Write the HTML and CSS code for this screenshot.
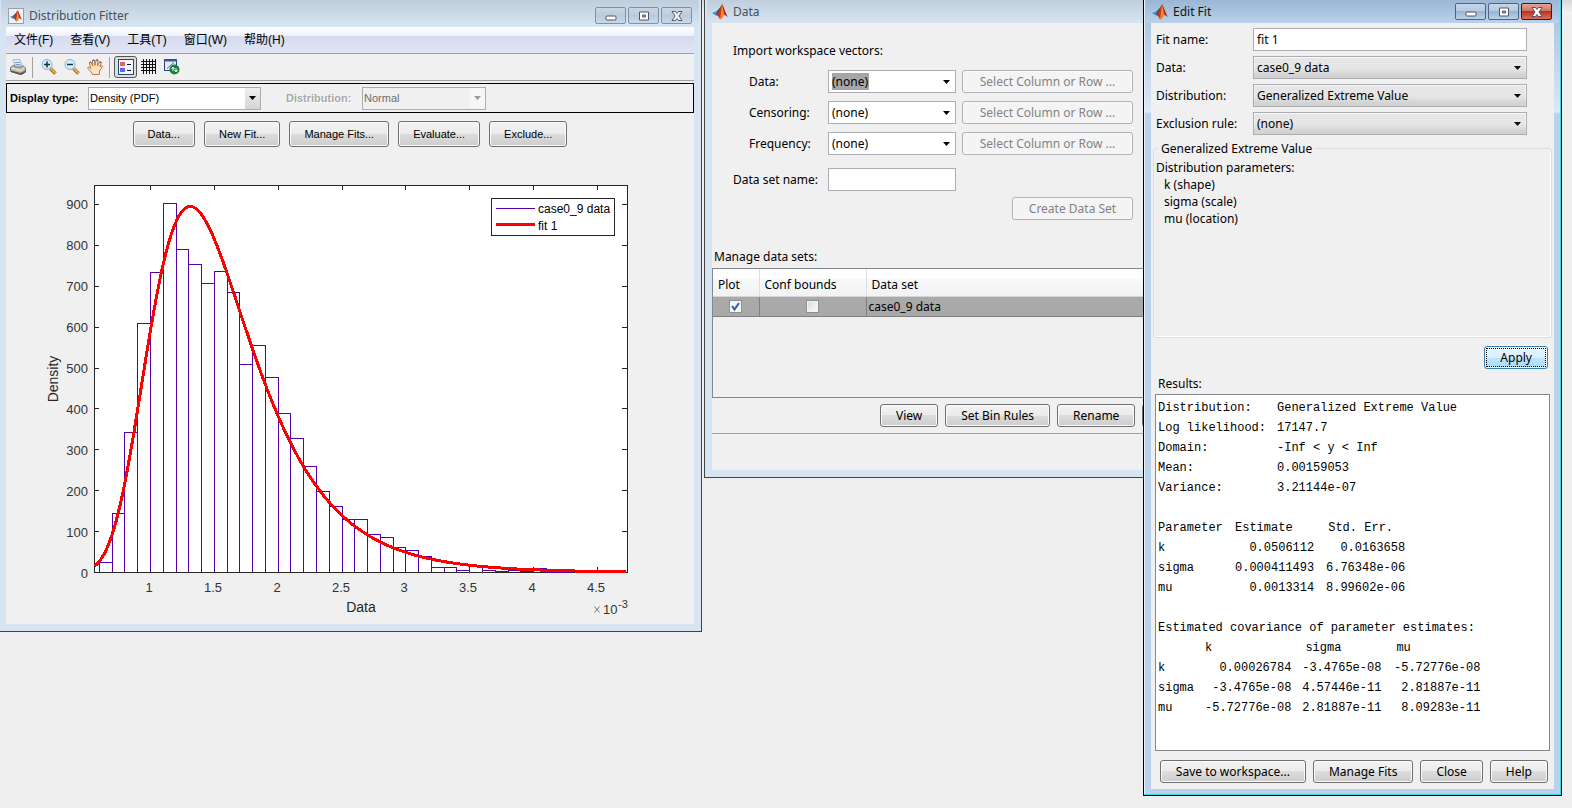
FILE: index.html
```html
<!DOCTYPE html>
<html lang="zh-CN">
<head>
    <meta charset="utf-8">
    <meta name="viewport" content="width=device-width, initial-scale=1.0">
    <title>Distribution Fitter</title>
    <link rel="stylesheet" href="styles.css">
</head>
<body>
<svg class="defs" width="0" height="0" aria-hidden="true">
    <symbol id="logo" viewBox="0 0 16 16">
        <path d="M0 9 L5 7 L7 8.500 L4 11.500 Z" fill="#3b8fd0"/>
        <path d="M5 7 L8 3.500 L10 1 L8.500 6 L6.500 9.500 L4 11.500 Z" fill="#27557f"/>
        <path d="M10 0 C8.500 3 8 7 4 11.500 C6 11 7 13 8 15.500 L11 13 L11.500 5 Z" fill="#c8371c"/>
        <path d="M10 0 C9.500 4 9 9 8 15.500 C10 14.500 11 11.500 12.500 11 L12 5 Z" fill="#f58a26"/>
        <path d="M10 0 C12 3 13.500 9 16 13 C14.500 12 13.500 11 12.300 11 Z" fill="#b02818"/>
    </symbol>
    <symbol id="min" viewBox="0 0 12 10"><rect x="1" y="5" width="10" height="4" rx="1" fill="#fff" stroke="#535666"/></symbol>
    <symbol id="max" viewBox="0 0 12 10"><path d="M1.500 1h9v8h-9zM4.500 4v2h3V4z" fill="#fff" fill-rule="evenodd" stroke="#535666"/></symbol>
    <symbol id="close" viewBox="0 0 12 10"><path d="M1 .5h3.500L6 2.500 7.500.5H11L8 5l3 4.500H7.500L6 7.500 4.500 9.500H1L4 5z" fill="#fff" stroke="#535666"/></symbol>
</svg>

<div id="desktop">

    <div class="window fitter">
        <div class="titlebar">
            <svg class="logo boxed"><use href="#logo"/></svg>
            <span class="title">Distribution Fitter</span>
            <button class="winbtn" aria-label="Minimize"><svg width="12" height="10"><use href="#min"/></svg></button>
            <button class="winbtn" aria-label="Maximize"><svg width="12" height="10"><use href="#max"/></svg></button>
            <button class="winbtn" aria-label="Close"><svg width="12" height="10"><use href="#close"/></svg></button>
        </div>
        <div class="client">
            <div class="menubar">
                <a href="#">文件(F)</a>
                <a href="#">查看(V)</a>
                <a href="#">工具(T)</a>
                <a href="#">窗口(W)</a>
                <a href="#">帮助(H)</a>
            </div>
            <div class="toolbar">
                <button class="tool" aria-label="Print">
                    <svg width="16" height="16" viewBox="0 0 16 16">
                        <path d="M3 .5h7l2 6.500H5z" fill="#dfe9f8" stroke="#a9bbd6"/>
                        <path d="M5 3.500h5M5.500 5.500h5" stroke="#7f9fd0"/>
                        <path d="M.5 8.500L4 6l1 2h7l1-1.500 2.500 2.500v4l-4 2.500L.5 12.500z" fill="#b9b9b4" stroke="#777"/>
                        <path d="M1.500 9l9 2.500 4-2.500" fill="none" stroke="#f5f5f5"/>
                        <path d="M1 11.500l9.500 2.500 5-2.500v2l-5 2.500L1 13z" fill="#555"/>
                        <path d="M3 10.500l5 1.500" stroke="#d8c640"/>
                    </svg>
                </button>
                <span class="sep"></span>
                <button class="tool" aria-label="Zoom in">
                    <svg width="16" height="16" viewBox="0 0 16 16">
                        <path d="M9.500 9.500l5 5" stroke="#9a6a28" stroke-width="3.500"/>
                        <path d="M9.500 9l5 5" stroke="#f0a848" stroke-width="2"/>
                        <circle cx="6" cy="5.500" r="5" fill="#d6eefa" stroke="#7fb0dc"/>
                        <path d="M3 5.500h6M6 2.500v6" stroke="#134" stroke-width="1.500"/>
                    </svg>
                </button>
                <button class="tool" aria-label="Zoom out">
                    <svg width="16" height="16" viewBox="0 0 16 16">
                        <path d="M9.500 9.500l5 5" stroke="#9a6a28" stroke-width="3.500"/>
                        <path d="M9.500 9l5 5" stroke="#f0a848" stroke-width="2"/>
                        <circle cx="6" cy="5.500" r="5" fill="#d6eefa" stroke="#7fb0dc"/>
                        <path d="M3 5.500h6" stroke="#134" stroke-width="1.500"/>
                    </svg>
                </button>
                <button class="tool" aria-label="Pan">
                    <svg width="16" height="16" viewBox="0 0 16 16">
                        <path d="M5.500 15.500L4 12.500.8 9.500c-.6-1 .7-2 1.700-1.200L4 9.500 2.500 4.500c-.3-1.500 1.400-2 1.900-.6L5.800 7 5.500 2c0-1.500 1.900-1.500 2 0L8 6.500 9 1.500c.3-1.300 2-1 1.900.4L10.500 7l1.800-3.600c.6-1.200 2.200-.5 1.700.8L13 8l1.400-1.200c1-.6 1.700.3 1 1.200L12.500 12v3.500z" fill="#ffe3c4" stroke="#c07a3a"/>
                        <path d="M2.500 4.500c-.3-1.500 1.400-2 1.900-.6M5.500 2c0-1.500 1.900-1.500 2 0M9 1.500c.3-1.300 2-1 1.900.4M12.300 3.400c.6-1.200 2.200-.5 1.700.8" fill="none" stroke="#3d5f9a"/>
                    </svg>
                </button>
                <span class="sep"></span>
                <button class="tool pressed" aria-label="Legend" aria-pressed="true">
                    <svg width="16" height="16" viewBox="0 0 16 16">
                        <rect x=".5" y=".5" width="15" height="15" fill="#f4f6ff" stroke="#24457e"/>
                        <rect x="2" y="3" width="5" height="4" fill="#e8605c"/>
                        <rect x="2" y="9" width="5" height="4" fill="#6a62ea"/>
                        <path d="M9 5.500h4M9 11.500h4" stroke="#112"/>
                    </svg>
                </button>
                <button class="tool" aria-label="Grid">
                    <svg width="16" height="16" viewBox="0 0 16 16" shape-rendering="crispEdges">
                        <path d="M2.500 0v15M5.500 0v15M8.500 0v15M11.500 0v15M14.500 0v15M0 2.500h15M0 5.500h15M0 8.500h15M0 11.500h15" stroke="#111"/>
                    </svg>
                </button>
                <button class="tool" aria-label="Restore defaults">
                    <svg width="16" height="16" viewBox="0 0 16 16">
                        <rect x=".5" y=".5" width="12" height="11" fill="#e3ecfb" stroke="#24457e"/>
                        <path d="M0 1.500h13" stroke="#3a5ba0" stroke-width="2"/>
                        <path d="M3 9.500l7-6" stroke="#667"/>
                        <circle cx="10.500" cy="10.500" r="5" fill="#15803d"/>
                        <path d="M7.500 10l1.500-2 1.500 2M9 8.500V12M10.500 11l1.500 2 1.500-2M12 9v3.500" fill="none" stroke="#fff"/>
                    </svg>
                </button>
            </div>
            <div class="display">
                <label for="dtype">Display type:</label>
                <select id="dtype" class="combo dtype"><option>Density (PDF)</option></select>
                <label for="dist" class="off">Distribution:</label>
                <select id="dist" class="combo dist" disabled><option>Normal</option></select>
            </div>
            <div class="actions">
                <button class="btn">Data...</button>
                <button class="btn">New Fit...</button>
                <button class="btn">Manage Fits...</button>
                <button class="btn">Evaluate...</button>
                <button class="btn">Exclude...</button>
            </div>
            <svg class="plot" viewBox="6 155 688 469">
                <rect class="area" x="94.500" y="185.500" width="533" height="387"/>
                <path id="ticks" class="axis"/>
                <path id="bars" class="bars"/>
                <polyline id="curve" class="curve"/>
                <g id="ylabels" class="tick" text-anchor="end"></g>
                <g id="xlabels" class="tick" text-anchor="middle"></g>
                <text class="axlabel" x="361" y="612" text-anchor="middle">Data</text>
                <text class="axlabel" transform="translate(58 379) rotate(-90)" text-anchor="middle">Density</text>
                <path d="M594.500 606.500l5 6M599.500 606.500l-5 6" stroke="#777"/>
                <text class="tick" x="603" y="614">10</text>
                <text class="power" x="618" y="608">-3</text>
                <rect class="area" x="491.500" y="198.500" width="123" height="37"/>
                <path class="bars" d="M496 208.500h39"/>
                <path class="curve" d="M496 224.500h39"/>
                <text class="legend" x="538" y="213">case0_9 data</text>
                <text class="legend" x="538" y="230">fit 1</text>
            </svg>
        </div>
    </div>

    <div class="window data">
        <div class="titlebar">
            <svg class="logo"><use href="#logo"/></svg>
            <span class="title">Data</span>
        </div>
        <div class="client">
            <div class="import">
                <div class="heading">Import workspace vectors:</div>
                <label class="sub" for="vdata">Data:</label>
                <div class="combo picked"><select id="vdata"><option>(none)</option></select></div>
                <button class="btn" disabled>Select Column or Row ...</button>
                <label class="sub" for="vcens">Censoring:</label>
                <select id="vcens" class="combo"><option>(none)</option></select>
                <button class="btn" disabled>Select Column or Row ...</button>
                <label class="sub" for="vfreq">Frequency:</label>
                <select id="vfreq" class="combo"><option>(none)</option></select>
                <button class="btn" disabled>Select Column or Row ...</button>
                <label class="setname" for="setname">Data set name:</label>
                <input id="setname" class="setname" type="text">
            </div>
            <div class="createrow"><button class="btn" disabled>Create Data Set</button></div>
            <div class="manage">Manage data sets:</div>
            <div class="sets">
                <table>
                    <tr><th class="c1">Plot</th><th class="c2">Conf bounds</th><th>Data set</th></tr>
                    <tr>
                        <td class="mid"><input type="checkbox" aria-label="Plot" checked></td>
                        <td class="mid"><input type="checkbox" aria-label="Conf bounds"></td>
                        <td>case0_9 data</td>
                    </tr>
                </table>
            </div>
            <div class="setbtns">
                <button class="btn">View</button>
                <button class="btn">Set Bin Rules</button>
                <button class="btn">Rename</button>
                <button class="btn" aria-label="Delete"></button>
            </div>
        </div>
    </div>

    <div class="window edit">
        <div class="titlebar">
            <svg class="logo"><use href="#logo"/></svg>
            <span class="title">Edit Fit</span>
            <button class="winbtn" aria-label="Minimize"><svg width="12" height="10"><use href="#min"/></svg></button>
            <button class="winbtn" aria-label="Maximize"><svg width="12" height="10"><use href="#max"/></svg></button>
            <button class="winbtn red" aria-label="Close"><svg width="12" height="10"><use href="#close"/></svg></button>
        </div>
        <div class="client">
            <div class="form">
                <label for="fname">Fit name:</label>
                <input id="fname" type="text" value="fit 1">
                <label for="fdata">Data:</label>
                <select id="fdata" class="combo"><option>case0_9 data</option></select>
                <label for="fdist">Distribution:</label>
                <select id="fdist" class="combo"><option>Generalized Extreme Value</option></select>
                <label for="fexcl">Exclusion rule:</label>
                <select id="fexcl" class="combo"><option>(none)</option></select>
            </div>
            <fieldset>
                <legend>Generalized Extreme Value</legend>
                <div>Distribution parameters:</div>
                <ul>
                    <li>k (shape)</li>
                    <li>sigma (scale)</li>
                    <li>mu (location)</li>
                </ul>
            </fieldset>
            <div class="applyrow"><button class="btn apply">Apply</button></div>
            <div class="reslabel">Results:</div>
            <div class="results">
                <table class="summary">
                    <tr><th>Distribution:</th><td>Generalized Extreme Value</td></tr>
                    <tr><th>Log likelihood:</th><td>17147.7</td></tr>
                    <tr><th>Domain:</th><td>-Inf &lt; y &lt; Inf</td></tr>
                    <tr><th>Mean:</th><td>0.00159053</td></tr>
                    <tr><th>Variance:</th><td>3.21144e-07</td></tr>
                </table>
                <table class="params">
                    <tr><th>Parameter</th><th>Estimate</th><th>Std. Err.</th></tr>
                    <tr><th>k</th><td>0.0506112</td><td>0.0163658</td></tr>
                    <tr><th>sigma</th><td>0.000411493</td><td>6.76348e-06</td></tr>
                    <tr><th>mu</th><td>0.0013314</td><td>8.99602e-06</td></tr>
                </table>
                <div>Estimated covariance of parameter estimates:</div>
                <table class="cov">
                    <tr><th></th><th>k</th><th>sigma</th><th>mu</th></tr>
                    <tr><th>k</th><td>0.00026784</td><td>-3.4765e-08</td><td>-5.72776e-08</td></tr>
                    <tr><th>sigma</th><td>-3.4765e-08</td><td>4.57446e-11</td><td>2.81887e-11</td></tr>
                    <tr><th>mu</th><td>-5.72776e-08</td><td>2.81887e-11</td><td>8.09283e-11</td></tr>
                </table>
            </div>
            <div class="fitbtns">
                <button class="btn">Save to workspace...</button>
                <button class="btn">Manage Fits</button>
                <button class="btn">Close</button>
                <button class="btn">Help</button>
            </div>
        </div>
    </div>

</div>
<script src="plot.js"></script>
</body>
</html>
```

FILE: styles.css
```css
* {
    box-sizing: border-box;
}
body {
    margin: 0;
    background: #eee;
    color: #000;
    font-family: "Noto Sans", "Noto Sans CJK SC", sans-serif;
    font-size: 12px;
    line-height: 17px;
}
button, input, select {
    font: inherit;
    color: inherit;
    margin: 0;
}
.defs {
    display: block;
}
#desktop {
    position: relative;
    min-height: 100vh;
    overflow: hidden;
    background: linear-gradient(#d8d8d8, #f4f4f4 14px, #eee 15px);
}

/* windows */
.window {
    position: absolute;
    top: 0;
    border: 1px solid #444;
    border-top: 0;
    background: #d7e4f2;
}
.fitter {
    left: 0;
    width: 702px;
    padding: 0 7px 7px 6px;
    border-left: 0;
}
.data {
    left: 704px;
    width: 500px;
    padding: 0 7px 7px;
}
.edit {
    left: 1143px;
    width: 419px;
    padding: 0 7px 6px;
    border-color: #000;
    background: linear-gradient(#a3bfdc, #dbe8f6 112px, #b9d1ea 114px);
    box-shadow: inset -1px -1px #35d5ee, inset 1px 0 #e8f2fb;
}
.client {
    background: #f0f0f0;
}
.titlebar {
    display: flex;
    align-items: center;
    gap: 2px;
    height: 23px;
    margin: 0 -5px;
    padding: 0 5px;
    background: linear-gradient(#c0cedb, #d7e4f2);
}
.fitter .titlebar {
    height: 27px;
    padding: 4px 7px 0;
}
.edit .titlebar {
    background: linear-gradient(#9ab6d4, #bad1ea);
    padding: 0 7px 0 6px;
}
.title {
    flex: 1;
    padding-left: 3px;
    color: #44525e;
    font-size: 12px;
}
.edit .title {
    color: #111;
}
.logo {
    width: 16px;
    height: 16px;
}
.boxed {
    padding: 1px;
    border: 1px solid #9aa0a8;
    background: #eef2f7;
}
.winbtn {
    display: flex;
    align-items: center;
    justify-content: center;
    width: 31px;
    height: 17px;
    padding: 0;
    border: 1px solid #8290a8;
    border-radius: 2px;
    background: linear-gradient(#c9d6e4, #bccbdc 50%, #c9d8e8);
}
.edit .winbtn {
    border-color: #4c6484;
    background: linear-gradient(#c5d6e8, #b4c9e0 50%, #98b4d2 50%, #bad2ea);
}
.edit .red {
    border-color: #4b1418;
    background: linear-gradient(#e2a493, #d0705c 50%, #b83420 50%, #d9705a);
}

/* shared controls */
.btn {
    height: 23px;
    padding: 0 14px;
    border: 1px solid #707070;
    border-radius: 3px;
    background: linear-gradient(#f3f3f3, #ebebeb 50%, #dcdcdc 50%, #cdcdcd);
    box-shadow: inset 0 0 0 1px #fafafa;
    white-space: nowrap;
}
.btn:disabled {
    border-color: #adb2b5;
    background: #f4f4f4;
    color: #838383;
}
.combo, input[type=text] {
    height: 23px;
    min-width: 0;
    padding: 0 3px;
    border: 1px solid #abadb3;
    border-radius: 0;
    background: #fff;
}
.combo {
    appearance: none;
    background: #fff url("data:image/svg+xml,%3Csvg xmlns='http://www.w3.org/2000/svg' width='7' height='4'%3E%3Cpath d='M0 0h7L3.500 4z'/%3E%3C/svg%3E") no-repeat right 5px center;
}
.picked select {
    appearance: none;
    height: 17px;
    margin-top: 2px;
    padding: 0;
    border: 0;
    background: #a6a6a6;
}

/* distribution fitter */
.menubar {
    display: flex;
    align-items: center;
    gap: 17px;
    height: 27px;
    padding: 0 8px;
    border-bottom: 1px solid #a0a0a0;
    background: linear-gradient(#fff, #eef0f8 9px, #d4d9ed 9px, #e1e6f6);
    font-family: "Liberation Sans", "Noto Sans CJK SC", sans-serif;
}
.menubar a {
    color: #000;
    text-decoration: none;
}
.toolbar {
    display: flex;
    align-items: center;
    height: 27px;
    border-bottom: 1px solid #a0a0a0;
}
.tool {
    display: flex;
    align-items: center;
    justify-content: center;
    width: 23px;
    height: 22px;
    padding: 0;
    border: 0;
    background: none;
}
.pressed {
    border: 1px solid #555;
    border-radius: 3px;
    background: #ddd;
}
.sep {
    width: 1px;
    height: 21px;
    margin: 0 4px 0 3px;
    background: #a0a0a0;
}
.display {
    display: flex;
    align-items: center;
    height: 30px;
    margin-top: 2px;
    padding: 0 3px;
    border: 1px solid #000;
    font: 11px "Liberation Sans", sans-serif;
}
.display label {
    width: 78px;
    font-weight: bold;
}
.display .off {
    width: 76px;
    margin-left: 25px;
    color: #a8a8a8;
    text-shadow: 1px 1px #fff;
}
.dtype {
    width: 173px;
    padding: 0 1px;
    background: url("data:image/svg+xml,%3Csvg xmlns='http://www.w3.org/2000/svg' width='7' height='4'%3E%3Cpath d='M0 0h7L3.500 4z'/%3E%3C/svg%3E") no-repeat right 4px center,
        linear-gradient(#f0f0f0, #d4d4d4) no-repeat right / 15px 100%, #fff;
}
.dist {
    width: 124px;
    padding: 0 1px;
    background: url("data:image/svg+xml,%3Csvg xmlns='http://www.w3.org/2000/svg' width='7' height='4'%3E%3Cpath d='M0 0h7L3.500 4z' fill='%239a9a9a'/%3E%3C/svg%3E") no-repeat right 4px center,
        linear-gradient(#f6f6f6, #f6f6f6) no-repeat right / 15px 100%, #f0f0f0;
    color: #6d6d6d;
    opacity: 1;
}
.actions {
    display: flex;
    justify-content: center;
    gap: 9px;
    padding: 8px 0;
    font: 11px "Liberation Sans", sans-serif;
}
.actions .btn {
    height: 26px;
}
.plot {
    display: block;
    width: 100%;
    font-family: "Liberation Sans", sans-serif;
}
.area {
    fill: #fff;
    stroke: #262626;
    shape-rendering: crispEdges;
}
.axis, .bars, .curve {
    fill: none;
    stroke: #262626;
    shape-rendering: crispEdges;
}
.bars {
    stroke: #5500aa;
}
.curve {
    stroke: #f00;
    stroke-width: 3px;
}
.tick {
    fill: #333;
    font-size: 13px;
}
.axlabel {
    fill: #262626;
    font-size: 14px;
}
.power {
    fill: #333;
    font-size: 11px;
}
.legend {
    font-size: 12px;
}

/* data */
.data .client {
    padding-bottom: 36px;
}
.import {
    display: grid;
    grid-template-columns: 95px 128px 171px;
    align-items: center;
    row-gap: 8px;
    padding: 19px 0 0 21px;
}
.heading {
    grid-column: 1 / -1;
    height: 20px;
}
.import .sub {
    padding-left: 16px;
}
.import .btn {
    margin-left: 6px;
    width: 171px;
    padding: 0;
}
.import .setname {
    margin-top: 5px;
}
.createrow {
    width: 421px;
    padding-top: 6px;
    text-align: right;
}
.createrow .btn {
    width: 121px;
    padding: 0;
    vertical-align: top;
}
.manage {
    margin-top: 28px;
    padding-left: 2px;
}
.sets {
    height: 130px;
    margin-top: 3px;
    border: 1px solid #828790;
}
.sets table {
    width: 100%;
    border-collapse: collapse;
}
.sets th {
    height: 27px;
    padding: 4px 5px 0;
    border-right: 1px solid #dedfe1;
    border-bottom: 1px solid #d5d5d5;
    background: linear-gradient(#fff 9px, #f7f8fa 10px, #f1f2f4);
    font-weight: normal;
    text-align: left;
}
.sets td {
    height: 20px;
    padding: 0 2px;
    border-right: 1px solid #808080;
    border-bottom: 1px solid #808080;
    background: #a9a9a9;
}
.sets .c1 {
    width: 46px;
}
.sets .c2 {
    width: 107px;
}
.sets .mid {
    text-align: center;
}
.mid input {
    appearance: none;
    display: block;
    width: 13px;
    height: 13px;
    margin: 0 auto;
    border: 1px solid #8e8f8f;
    background: linear-gradient(135deg, #d5d8dc, #fff);
    box-shadow: inset 0 0 0 1px #f4f4f4;
}
.mid input:checked {
    background: #f4f6fa url("data:image/svg+xml,%3Csvg xmlns='http://www.w3.org/2000/svg' width='9' height='9'%3E%3Cpath d='M1 4l2.500 3.500L8 1' fill='none' stroke='%233a57a5' stroke-width='2'/%3E%3C/svg%3E") no-repeat center;
}
.setbtns {
    display: flex;
    gap: 7px;
    height: 36px;
    padding: 6px 0 0 168px;
    border-bottom: 1px solid #a0a0a0;
}
.setbtns .btn, .fitbtns .btn, .applyrow .btn {
    padding: 0 15px;
}

/* edit fit */
.form {
    display: grid;
    grid-template-columns: 97px 1fr;
    align-items: center;
    gap: 5px 0;
    padding: 5px 27px 0 5px;
}
.form .combo {
    background-color: #e6e6e6;
    box-shadow: inset 0 -9px 5px -3px #d2d2d2, inset 0 0 0 1px #f8f8f8;
}
fieldset {
    min-height: 198px;
    margin: 5px 2px 0;
    padding: 2px;
    border: 1px solid #d5dfe5;
    border-radius: 3px;
    box-shadow: inset -1px -1px #fff;
}
legend {
    padding: 0 3px;
    margin-left: 2px;
}
ul {
    margin: 0;
    padding: 0 0 0 8px;
    list-style: none;
}
.applyrow {
    padding: 8px 6px 6px 0;
    text-align: right;
}
.apply {
    border-color: #3c7fb1;
    background: linear-gradient(#eaf6fd, #d9f0fc 50%, #bee6fd 50%, #a7d9f5);
    outline: 1px dotted #000;
    outline-offset: -3px;
}
.applyrow .btn {
    vertical-align: top;
}
.reslabel {
    padding-left: 7px;
}
.results {
    min-height: 357px;
    margin: 2px 4px 0;
    padding: 3px 2px 2px;
    border: 1px solid #828790;
    background: #fff;
    font-family: "Liberation Mono", monospace;
    line-height: 20px;
}
.results table {
    table-layout: fixed;
    border-collapse: collapse;
    margin-bottom: 20px;
}
.results .cov {
    margin-bottom: 0;
}
.results th, .results td {
    padding: 0;
    font-weight: normal;
    text-align: left;
    white-space: nowrap;
}
.summary th {
    width: 119px;
}
.results .params td, .results .cov td {
    text-align: right;
}
.params th {
    width: 77px;
}
.results .params th:nth-child(3) {
    width: 91px;
    padding-left: 14px;
}
.cov th {
    width: 47px;
}
.cov th:nth-child(2) {
    width: 86px;
}
.results .cov th:nth-child(3) {
    width: 90px;
    padding-left: 14px;
}
.results .cov th:nth-child(4) {
    width: 99px;
    padding-left: 15px;
}
.fitbtns {
    display: flex;
    justify-content: flex-end;
    gap: 7px;
    padding: 9px 6px 6px;
}
```

FILE: plot.js
```js
var ns = "http://www.w3.org/2000/svg";

// densities per bin, bins are 0.1 wide and start at 0.6 (x 10^-3)
var density = [25, 144, 342, 609, 734, 902, 790, 753, 707, 736, 685, 509, 555, 477,
    389, 328, 259, 198, 161, 130, 130, 93, 86, 61, 54, 39, 12, 12, 5, 17, 5, 2, 5, 2, 10, 1, 1];

// fitted generalized extreme value parameters
var k = 0.0506112, sigma = 0.411493, mu = 1.3314;

function px(x) { return 150.5 + (x - 1) * 127.7; }
function py(d) { return 572.5 - d * 0.409; }
function snap(v) { return Math.floor(v) + 0.5; }

function label(id, x, y, text) {
    var t = document.createElementNS(ns, "text");
    t.setAttribute("x", x);
    t.setAttribute("y", y);
    t.textContent = text;
    document.getElementById(id).appendChild(t);
}

var bars = "";
for (var i = 0; i < density.length; i++) {
    bars += "M" + snap(px(0.6 + i * 0.1)) + " 572V" + snap(py(density[i])) +
        "H" + snap(px(0.7 + i * 0.1)) + "V572";
}
document.getElementById("bars").setAttribute("d", bars);

var points = [];
for (var x = 0.5615; x <= 4.735; x += 0.02) {
    var t = Math.pow(1 + k * (x - mu) / sigma, -1 / k);
    points.push(px(x) + "," + py(1000 / sigma * Math.pow(t, k + 1) * Math.exp(-t)));
}
document.getElementById("curve").setAttribute("points", points.join(" "));

var ticks = "";
for (var d = 0; d <= 900; d += 100) {
    ticks += "M94 " + snap(py(d)) + "h5M627 " + snap(py(d)) + "h-5";
    label("ylabels", 88, Math.round(py(d)) + 5, d);
}
for (var v = 1; v <= 4.5; v += 0.5) {
    ticks += "M" + snap(px(v)) + " 185v5M" + snap(px(v)) + " 572v-5";
    label("xlabels", Math.floor(px(v)) - 1, 592, v);
}
document.getElementById("ticks").setAttribute("d", ticks);
```
